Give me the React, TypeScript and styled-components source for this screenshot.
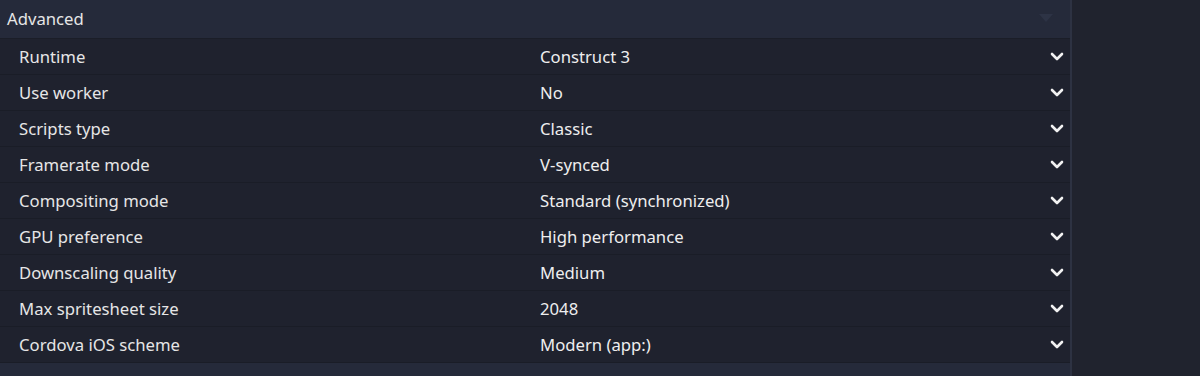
import React from 'react'
import styled, { createGlobalStyle } from 'styled-components'

const GlobalStyle = createGlobalStyle`
  html, body {
    margin: 0;
    padding: 0;
    background: #20232e;
    overflow: hidden;
  }
  body {
    font-family: "Noto Sans", "Open Sans", sans-serif;
  }
`

const rows = [
  { label: 'Runtime', value: 'Construct 3' },
  { label: 'Use worker', value: 'No' },
  { label: 'Scripts type', value: 'Classic' },
  { label: 'Framerate mode', value: 'V-synced' },
  { label: 'Compositing mode', value: 'Standard (synchronized)' },
  { label: 'GPU preference', value: 'High performance' },
  { label: 'Downscaling quality', value: 'Medium' },
  { label: 'Max spritesheet size', value: '2048' },
  { label: 'Cordova iOS scheme', value: 'Modern (app:)' }
]

const Chevron = () => (
  <svg width="14" height="10" viewBox="0 0 14 10">
    <polyline
      points="2,2 7,7 12,2"
      fill="none"
      stroke="#f2f2f2"
      strokeWidth="2.6"
      strokeLinecap="round"
      strokeLinejoin="round"
    />
  </svg>
)

const SectionHeader = ({ title }: { title: string }) => (
  <Header>
    <HeaderTitle>{title}</HeaderTitle>
    <HeaderArrow />
  </Header>
)

const App = () => {
  return (
    <>
      <GlobalStyle />
      <Page>
        <Panel>
          <SectionHeader title="Advanced" />
          {rows.map((row) => (
            <Row key={row.label}>
              <Label>{row.label}</Label>
              <Value>{row.value}</Value>
              <ChevronBox>
                <Chevron />
              </ChevronBox>
            </Row>
          ))}
          <SectionHeader title="Editor" />
        </Panel>
        <Side />
      </Page>
    </>
  )
}

export default App

const Page = styled.div`
  display: flex;
  width: 1200px;
  height: 376px;
  overflow: hidden;
`

const Panel = styled.div`
  width: 1070px;
  flex-shrink: 0;
  display: flex;
  flex-direction: column;
  background: #1f222e;
  border-right: 2px solid #2d3242;
`

const Side = styled.div`
  flex: 1;
  background: #20232e;
`

const Header = styled.div`
  height: 39px;
  flex-shrink: 0;
  display: flex;
  align-items: center;
  justify-content: space-between;
  padding: 0 7px 2px;
  background: #252a3a;
  border-bottom: 1px solid #1b1e28;
  box-sizing: border-box;
`

const HeaderTitle = styled.span`
  font-size: 16.7px;
  color: #e6e6e6;
`

const HeaderArrow = styled.span`
  width: 0;
  height: 0;
  margin-right: 10px;
  border-left: 7px solid transparent;
  border-right: 7px solid transparent;
  border-top: 8px solid #2d3345;
`

const Row = styled.div`
  height: 36px;
  flex-shrink: 0;
  display: flex;
  align-items: center;
  padding-left: 19px;
  border-bottom: 1px solid #1a1d27;
  box-sizing: border-box;
`

const Label = styled.span`
  width: 521px;
  font-size: 16.7px;
  color: #e6e6e6;
`

const Value = styled.span`
  flex: 1;
  font-size: 16.7px;
  color: #eeeeee;
`

const ChevronBox = styled.span`
  display: flex;
  align-items: center;
  width: 14px;
  margin-right: 6px;
`
